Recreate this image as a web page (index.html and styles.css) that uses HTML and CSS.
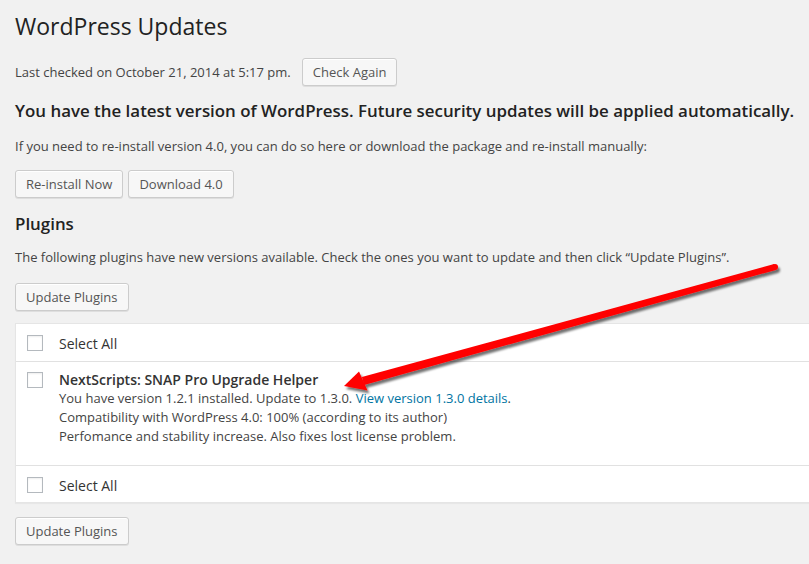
FILE: index.html
```html
<!DOCTYPE html>
<html lang="en">
<head>
<meta charset="utf-8">
<title>WordPress Updates</title>
<link rel="stylesheet" href="styles.css">
</head>
<body>
<div class="wrap">
  <h2 class="title">WordPress Updates</h2>
  <div class="checked">
    <span>Last checked on October 21, 2014 at 5:17 pm.</span>
    <a class="button">Check Again</a>
  </div>
  <h3 class="heading latest">You have the latest version of WordPress. Future security updates will be applied automatically.</h3>
  <p class="note">If you need to re-install version 4.0, you can do so here or download the package and re-install manually:</p>
  <div class="actions">
    <a class="button">Re-install Now</a>
    <a class="button">Download 4.0</a>
  </div>
  <h3 class="heading section">Plugins</h3>
  <p class="note tight">The following plugins have new versions available. Check the ones you want to update and then click “Update Plugins”.</p>
  <div class="actions first">
    <a class="button">Update Plugins</a>
  </div>
  <div class="list">
    <div class="row head">
      <div class="check"><span class="cb"></span></div>
      <div class="cell">Select All</div>
    </div>
    <div class="row plugin">
      <div class="check"><span class="cb"></span></div>
      <div class="cell">
        <strong class="name">NextScripts: SNAP Pro Upgrade Helper</strong>
        <div>You have version 1.2.1 installed. Update to 1.3.0. <a class="link">View version 1.3.0 details</a>.</div>
        <div>Compatibility with WordPress 4.0: 100% (according to its author)</div>
        <div>Perfomance and stability increase. Also fixes lost license problem.</div>
      </div>
    </div>
    <div class="row foot">
      <div class="check"><span class="cb"></span></div>
      <div class="cell">Select All</div>
    </div>
  </div>
  <div class="actions after">
    <a class="button">Update Plugins</a>
  </div>
  <h3 class="heading themes">Themes</h3>
</div>
<svg class="arrow" width="809" height="564" viewBox="0 0 809 564" aria-hidden="true">
  <defs>
    <filter id="sh" x="-5%" y="-20%" width="110%" height="140%">
      <feDropShadow dx="2" dy="3" stdDeviation="1.3" flood-color="#000" flood-opacity="0.55"/>
    </filter>
  </defs>
  <g filter="url(#sh)" fill="#ff0000">
    <polygon points="364.1,384.9 361.9,377.1 774.2,264.1 775.8,269.9"/>
    <circle cx="775" cy="267" r="3"/>
    <polygon points="344,386 359,371.5 367.5,390.5"/>
  </g>
</svg>
</body>
</html>
```
FILE: styles.css
```css
html, body {
  margin: 0;
  height: 100%;
  overflow: hidden;
  background: #f1f1f1;
}
body {
  position: relative;
  font-family: "Open Sans", "Noto Sans", sans-serif;
  font-size: 13px;
  line-height: 19px;
  color: #444;
}
.wrap {
  padding-left: 15px;
  width: 840px;
}
.title {
  margin: 0;
  padding-top: 12px;
  font-size: 23px;
  font-weight: 400;
  line-height: 29px;
  color: #222;
}
.checked {
  display: flex;
  align-items: center;
  height: 28px;
  margin-top: 17px;
}
.checked .button {
  margin-left: 11px;
}
.heading {
  margin: 0;
  font-size: 16.9px;
  font-weight: 600;
  line-height: 25px;
  color: #222;
  white-space: nowrap;
}
.latest { margin-top: 12px; }
.section { margin-top: 13px; }
.themes { margin-top: 12px; }
.note {
  margin: 14px 0 0;
  white-space: nowrap;
}
.note.tight { margin-top: 12px; }
.actions {
  display: flex;
  gap: 5px;
  margin-top: 14px;
}
.actions.first { margin-top: 16px; }
.actions.after { margin-top: 14px; }
.button {
  display: inline-block;
  box-sizing: border-box;
  height: 28px;
  padding: 0 10px 1px;
  line-height: 26px;
  font-size: 13px;
  color: #555;
  background: #f7f7f7;
  border: 1px solid #ccc;
  border-radius: 3px;
  box-shadow: inset 0 1px 0 #fff, 0 1px 0 rgba(0, 0, 0, 0.08);
  white-space: nowrap;
}
.list {
  margin-top: 12px;
  background: #fff;
  border: 1px solid #e5e5e5;
  box-shadow: 0 1px 1px rgba(0, 0, 0, 0.04);
}
.row {
  display: flex;
  align-items: flex-start;
}
.row + .row {
  border-top: 1px solid #e1e1e1;
}
.check {
  width: 33px;
  padding-left: 11px;
  box-sizing: border-box;
  flex: none;
}
.cb {
  display: block;
  width: 16px;
  height: 16px;
  box-sizing: border-box;
  border: 1px solid #b4b9be;
  background: #fff;
  box-shadow: inset 0 1px 2px rgba(0, 0, 0, 0.07);
}
.cell {
  padding-left: 10px;
}
.head, .foot {
  font-size: 14px;
  color: #333;
}
.head {
  padding: 10px 0 8px;
}
.head .check {
  padding-top: 1px;
}
.foot {
  padding: 10px 0 7px;
}
.foot .check {
  padding-top: 1px;
}
.plugin {
  padding: 8px 0 19px;
}
.plugin .check {
  padding-top: 2px;
}
.name {
  display: block;
  font-size: 14px;
  font-weight: 600;
  color: #333;
}
.link {
  color: #0074a2;
}
.arrow {
  position: absolute;
  left: 0;
  top: 0;
  pointer-events: none;
}
```
